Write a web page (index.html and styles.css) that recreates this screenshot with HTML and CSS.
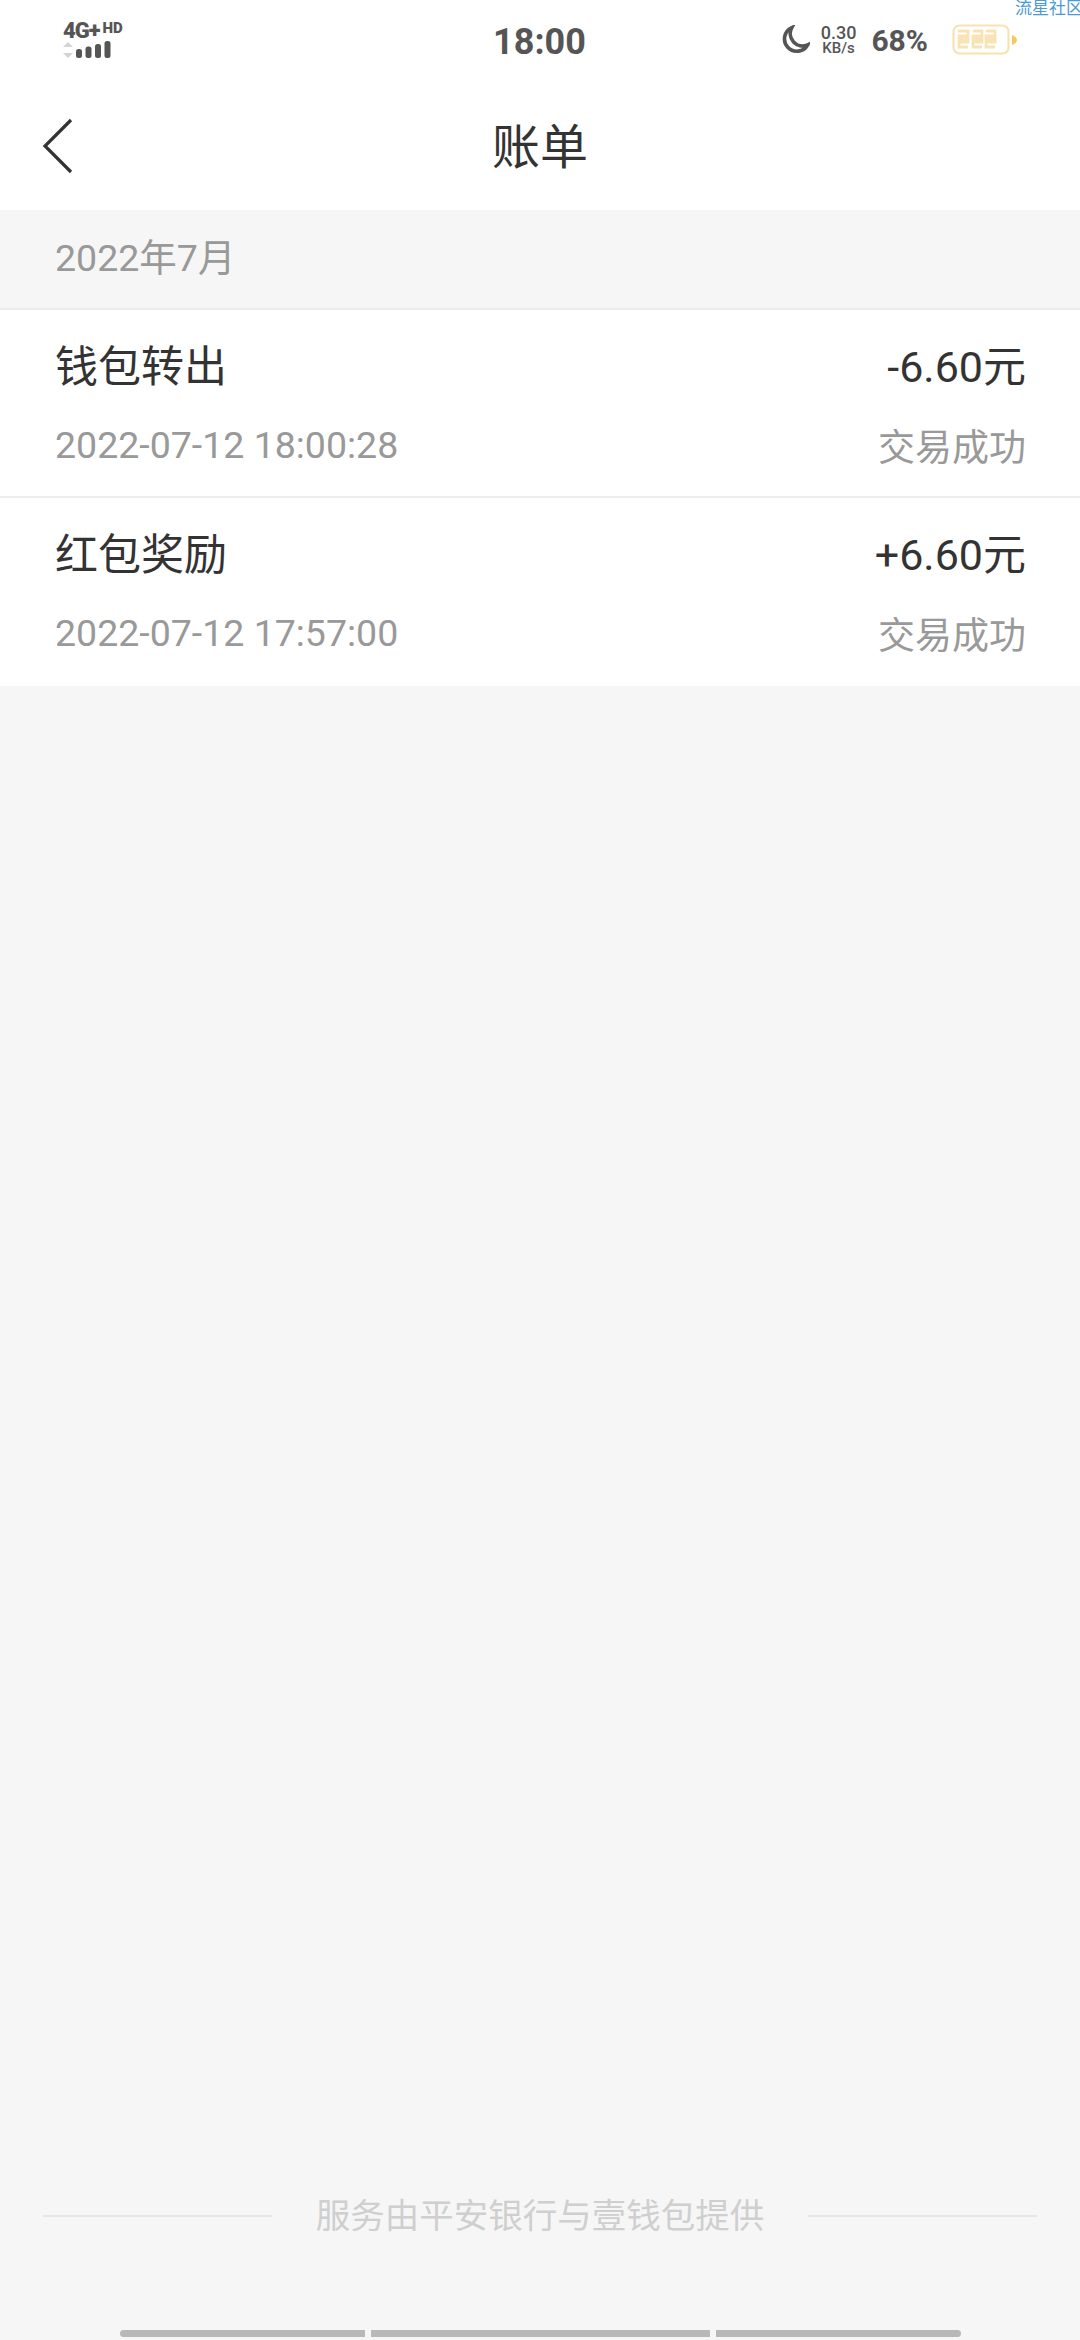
FILE: index.html
```html
<!DOCTYPE html>
<html lang="zh-CN">
<head>
  <meta charset="UTF-8" />
  <meta name="viewport" content="width=device-width, initial-scale=1.0"/>
  <title>账单</title>
  <link rel="stylesheet" href="styles.css">
</head>
<body>

  <div class="watermark">流星社区</div>

  <div class="statusbar">
    <div class="signal">
      <div class="net"><span class="net-4g">4G+</span><span class="net-hd">HD</span></div>
      <svg class="bars" width="60" height="18" viewBox="0 0 60 18">
        <path d="M5 1l5 5H0zM5 17l5-5H0z" fill="#d4d4d4"/>
        <rect x="13" y="8" width="6" height="9" rx="2.5" fill="#555"/>
        <rect x="22.500" y="5.500" width="6" height="11.500" rx="2.500" fill="#555"/>
        <rect x="32" y="3" width="6" height="14" rx="2.500" fill="#555"/>
        <rect x="41.500" y="0" width="6" height="17" rx="2.500" fill="#555"/>
      </svg>
    </div>
    <div class="time">18:00</div>
    <div class="status-right">
      <svg class="moon" width="30" height="30" viewBox="0 0 28 28">
        <path d="M11 2.500A11.500 11.500 0 1 0 25.800 18.500 11.500 11.500 0 0 1 11 2.500z" fill="none" stroke="#555" stroke-width="3.400"/>
      </svg>
      <div class="speed"><span>0.30</span><span class="speed-unit">KB/s</span></div>
      <div class="percent">68%</div>
      <svg class="battery" width="66" height="32" viewBox="0 0 66 32">
        <rect x="1.500" y="1.500" width="55" height="28" rx="6" fill="#fff" stroke="#f8e3b0" stroke-width="2.200"/>
        <path d="M6 7h10v5H7v3h9v3H7v5h9M21 7h9v5h-9v3h9v3h-9v5h9M34 7h9v5h-9v3h9v3h-9v5h9" fill="none" stroke="#f8e3b4" stroke-width="2.800"/>
        <path d="M60 11c3 1 5 3 5 5s-2 4-5 5z" fill="#f4c95d"/>
      </svg>
    </div>
  </div>

  <header class="navbar">
    <svg class="back" width="32" height="56" viewBox="0 0 32 56">
      <path d="M29 2L3 28l26 26" fill="none" stroke="#333" stroke-width="3.200"/>
    </svg>
    <h1>账单</h1>
  </header>

  <div class="month">2022年7月</div>

  <div class="bill-list">
    <div class="bill">
      <div class="bill-line">
        <span class="bill-name">钱包转出</span>
        <span class="bill-amount">-6.60元</span>
      </div>
      <div class="bill-line bill-sub">
        <span>2022-07-12 18:00:28</span>
        <span class="bill-state">交易成功</span>
      </div>
    </div>
    <div class="bill">
      <div class="bill-line">
        <span class="bill-name">红包奖励</span>
        <span class="bill-amount">+6.60元</span>
      </div>
      <div class="bill-line bill-sub">
        <span>2022-07-12 17:57:00</span>
        <span class="bill-state">交易成功</span>
      </div>
    </div>
  </div>

  <footer class="provider">
    <span class="provider-line"></span>
    <span class="provider-text">服务由平安银行与壹钱包提供</span>
    <span class="provider-line"></span>
  </footer>

  <div class="homebar">
    <span class="seg seg-left"></span>
    <span class="seg seg-mid"></span>
    <span class="seg seg-right"></span>
  </div>

</body>
</html>
```

FILE: styles.css
```css
*{margin:0;padding:0;box-sizing:border-box}
html,body{height:100%}
body{position:relative;display:flex;flex-direction:column;height:2340px;overflow:hidden;font-family:Roboto,"Noto Sans CJK SC",sans-serif;background:#f6f6f6;color:#333}

.watermark{position:absolute;top:-2px;right:-3px;font-size:17px;line-height:20px;color:#4a9ad8;white-space:nowrap}

.statusbar{display:grid;grid-template-columns:1fr auto 1fr;align-items:center;height:80px;padding:0 64px 0 63px;background:#fff;color:#555}
.signal{display:flex;flex-direction:column;gap:1px}
.net{display:flex;align-items:flex-start;height:19px;font-weight:900;line-height:19px}
.net-4g{font-size:22px;letter-spacing:-1px}
.net-hd{font-size:15px;line-height:14px;margin-left:3px}
.bars{display:block}
.time{font-size:36px;font-weight:700;margin-top:4px}
.status-right{display:flex;align-items:center;justify-content:flex-end}
.moon{margin-right:11px}
.speed{display:flex;flex-direction:column;align-items:center;font-size:18px;font-weight:500;line-height:17px;margin-right:15px}
.speed-unit{font-size:15px;line-height:15px}
.percent{font-size:30px;font-weight:700;margin-right:24px}
.battery{margin-right:-2px}

.navbar{position:relative;display:flex;align-items:center;justify-content:center;height:130px;background:#fff}
.navbar h1{font-size:48px;font-weight:400;line-height:130px;margin-top:5px}
.back{position:absolute;left:42px;top:38px}

.month{height:100px;padding-left:55px;font-size:37.500px;line-height:97px;color:#999;border-bottom:2px solid #ececec}

.bill-list{background:#fff}
.bill{height:188px;padding:0 54px 0 55px;border-bottom:2px solid #ececec}
.bill:last-child{border-bottom:none}
.bill-line{display:flex;justify-content:space-between;align-items:center}
.bill-line:first-child{padding-top:19px;height:86px}
.bill-name,.bill-amount{font-size:43px;color:#333}
.bill-sub{font-size:37.500px;color:#999;margin-top:22px}
.bill-state{font-size:37px}

.provider{display:flex;align-items:center;justify-content:space-between;margin-top:auto;margin-bottom:104px;padding:0 43px}
.provider-line{width:229px;height:2px;background:#e6e6e6}
.provider-text{font-size:34.500px;line-height:40px;color:#cfcfcf}

.homebar{position:absolute;left:120px;bottom:3px;display:flex;gap:6px;height:7px}
.seg{display:block;height:7px;background:#b8b8b8}
.seg-left{width:245px;border-radius:4px 0 0 4px}
.seg-mid{width:339px}
.seg-right{width:245px;border-radius:0 4px 4px 0}
```
